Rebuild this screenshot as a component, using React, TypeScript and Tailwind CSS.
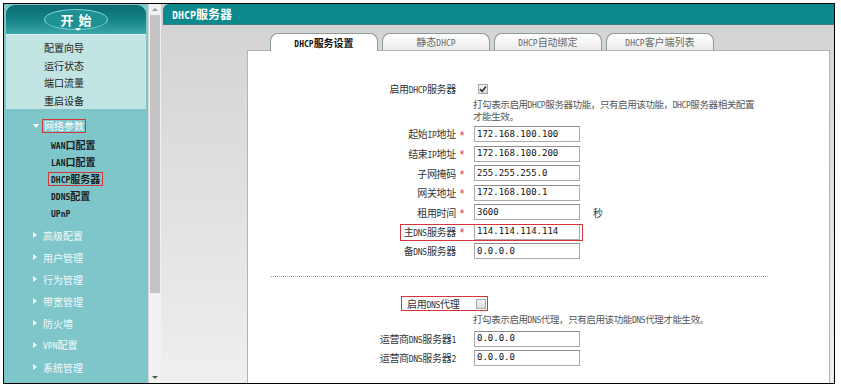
import type { ReactNode } from 'react'

const CJK = "font-['Noto_Sans_CJK_SC','Liberation_Sans',sans-serif]"
const MONO = "font-['DejaVu_Sans_Mono',monospace]"

// splits latin runs out so they render narrow like the old bitmap font
function Mix({ t, small = 'text-[8px]' }: { t: string; small?: string }) {
  const parts = t.split(/([A-Za-z0-9]+)/)
  return (
    <span>
      {parts.map((p, i) =>
        /^[A-Za-z0-9]+$/.test(p) ? (
          <span key={i} className={`${MONO} ${small}`}>{p}</span>
        ) : p ? (
          <span key={i}>{p}</span>
        ) : null
      )}
    </span>
  )
}

function Tri({ down = false }: { down?: boolean }) {
  return (
    <svg width="6" height="6" viewBox="0 0 6 6" className="shrink-0">
      {down ? <path d="M0 1 L6 1 L3 5 Z" fill="#fff" /> : <path d="M1 0 L5 3 L1 6 Z" fill="#f2fafa" />}
    </svg>
  )
}

function Check({ on }: { on: boolean }) {
  return (
    <div className="w-[10px] h-[10px] border border-[#a8a8a8] bg-gradient-to-b from-[#f4f4f4] to-[#dedede] flex items-center justify-center">
      {on && (
        <svg width="8" height="8" viewBox="0 0 8 8">
          <path d="M1 4.2 L3.2 6.3 L7 1.5" stroke="#333" strokeWidth="1.6" fill="none" />
        </svg>
      )}
    </div>
  )
}

function Input({ v }: { v: string }) {
  return (
    <div className={`w-[106px] h-[16px] border border-[#aaaaaa] border-t-[#8e8e8e] bg-white pl-[2px] flex items-center text-[9px] text-[#111] ${MONO}`}>
      {v}
    </div>
  )
}

function Row({ label, star, value, extra, boxed, h = 'h-[19.5px]' }: { label: string; star?: boolean; value: string; extra?: ReactNode; boxed?: boolean; h?: string }) {
  return (
    <div className={`relative flex items-center ${h}`}>
      <div className="w-[208px] text-right whitespace-nowrap tracking-[-0.3px]"><Mix t={label} /></div>
      <div className="w-[12px] text-center text-[#e2383c] text-[12px] leading-none font-['Liberation_Sans',sans-serif] pt-[3px]">{star ? '*' : ''}</div>
      <div className="ml-[6px]"><Input v={value} /></div>
      {extra}
      {boxed && <span className="absolute left-[152px] top-[2px] w-[183px] h-[17px] border border-[#d2363a]" />}
    </div>
  )
}

const subItems = ['WAN口配置', 'LAN口配置', 'DHCP服务器', 'DDNS配置', 'UPnP']
const menus = ['高级配置', '用户管理', '行为管理', '带宽管理', '防火墙', 'VPN配置', '系统管理']
const tabs = ['DHCP服务设置', '静态DHCP', 'DHCP自动绑定', 'DHCP客户端列表']

export default function App() {
  return (
    <div className={`w-[841px] h-[388px] bg-white pt-[3px] pl-[3px] ${CJK}`}>
      <div className="w-[832px] h-[381px] border border-black flex overflow-hidden">
        {/* left menu */}
        <aside className="w-[144px] h-full bg-[#7fc6cb] flex flex-col text-[10px]">
          <div className="mx-[2px] mt-[1px] h-[29px] rounded-t-[9px] bg-gradient-to-b from-[#0a6c71] via-[#138388] to-[#3aa8a9] flex items-center justify-center relative">
            <div className="w-[64px] h-[21px] rounded-[50%] border border-[#7fd0d0] bg-[#1d9094] flex items-center justify-center text-white font-bold text-[13px] tracking-[5px] pl-[5px]">
              开始
            </div>
            <div className="absolute left-[69px] bottom-[3px] w-0 h-0 border-l-[3px] border-r-[3px] border-t-[3px] border-l-transparent border-r-transparent border-t-white" />
          </div>
          <div className="mx-[2px] h-[75px] bg-[#c2e5e4] border-t border-[#e6f5f4] pt-[4px] pl-[38px] text-[#1e1e1e]">
            {['配置向导', '运行状态', '端口流量', '重启设备'].map(s => (
              <div key={s} className="h-[17.5px] flex items-center">{s}</div>
            ))}
          </div>
          <div className="pt-[9px] pl-[29px] h-[24px] flex items-center gap-[3px] text-white">
            <Tri down />
            <span className="border border-[#d0363c] px-[1px] h-[14px] flex items-center">网络参数</span>
          </div>
          <div className="mt-[3px] pl-[44px] font-bold text-[#1a1a1a]">
            {subItems.map(s => (
              <div key={s} className="h-[17px] flex items-center">
                <span className={s === 'DHCP服务器' ? 'border border-[#d0363c] px-[2px] h-[14px] flex items-center' : 'pl-[3px]'}>
                  <Mix t={s} />
                </span>
              </div>
            ))}
          </div>
          <div className="mt-[3px] pl-[28px] text-[#f2fafa]">
            {menus.map(s => (
              <div key={s} className="h-[22px] flex items-center gap-[5px]">
                <Tri />
                <Mix t={s} />
              </div>
            ))}
          </div>
        </aside>

        {/* scrollbar */}
        <div className="w-[13px] h-full bg-[#f1f1f1] border-l border-[#d6d6d6] flex flex-col items-center">
          <div className="h-[11px] flex items-center justify-center">
            <div className="w-0 h-0 border-l-[3px] border-r-[3px] border-b-[3px] border-l-transparent border-r-transparent border-b-[#9a9a9a]" />
          </div>
          <div className="w-[10px] h-[278px] bg-[#c4c4c4]" />
          <div className="flex-1" />
          <div className="h-[12px] flex items-center justify-center">
            <div className="w-0 h-0 border-l-[3px] border-r-[3px] border-t-[3px] border-l-transparent border-r-transparent border-t-[#555]" />
          </div>
        </div>

        {/* main */}
        <main className="flex-1 h-full flex flex-col bg-gradient-to-b from-[#d2d2d2] to-[#efefef]">
          <div className="ml-[2px] h-[21px] rounded-tl-[6px] bg-[#0b898d] border-b border-[#3d7e81] pl-[9px] flex items-center text-white font-bold text-[12px]">
            <Mix t="DHCP服务器" small="text-[10px]" />
          </div>
          <div className="flex-1 pl-[86px] pr-[4px] pt-[8px] flex flex-col">
            <div className="pl-[23px] h-[17px] flex items-end gap-[4px]">
              {tabs.map((t, i) =>
                i === 0 ? (
                  <div key={t} className="relative z-10 -mb-px w-[108px] h-[18px] rounded-t-[8px] border border-b-0 border-[#8e9b9b] bg-white flex items-center justify-center font-bold text-[10px] text-[#111]">
                    <Mix t={t} />
                  </div>
                ) : (
                  <div key={t} className="w-[108px] h-[17px] rounded-t-[8px] border border-b-0 border-[#8e9b9b] bg-gradient-to-b from-white to-[#ebebeb] flex items-center justify-center text-[10px] text-[#666]">
                    <Mix t={t} />
                  </div>
                )
              )}
            </div>
            <div className="flex-1 bg-white border-l border-t border-r border-[#b3b3b3] text-[10px] text-[#333] pt-[30px]">
              <div className="flex items-center h-[16px]">
                <div className="w-[208px] text-right tracking-[-0.3px]"><Mix t="启用DHCP服务器" /></div>
                <div className="ml-[22px]"><Check on /></div>
              </div>
              <div className="mt-[1.5px] pl-[225px] text-[9.5px] leading-[11px] tracking-[-0.4px] text-[#555] whitespace-nowrap">
                <div><Mix t="打勾表示启用DHCP服务器功能，只有启用该功能，DHCP服务器相关配置" /></div>
                <div>才能生效。</div>
              </div>
              <div className="mt-[3px]">
                <Row label="起始IP地址" star value="172.168.100.100" />
                <Row label="结束IP地址" star value="172.168.100.200" />
                <Row label="子网掩码" star value="255.255.255.0" />
                <Row label="网关地址" star value="172.168.100.1" />
                <Row label="租用时间" star value="3600" extra={<span className="ml-[13px]">秒</span>} />
                <Row label="主DNS服务器" star value="114.114.114.114" boxed />
                <Row label="备DNS服务器" value="0.0.0.0" />
              </div>
              <div className="mt-[15px] ml-[23px] w-[497px] border-t border-dotted border-[#9a9a9a]" />
              <div className="mt-[19px] ml-[153px] w-[87px] h-[15px] border border-[#d2363a] pl-[5px] pr-[1px] flex items-center justify-between tracking-[-0.3px]">
                <Mix t="启用DNS代理" />
                <Check on={false} />
              </div>
              <div className="mt-[2.5px] pl-[225px] text-[9.5px] leading-[11px] tracking-[-0.4px] text-[#555] whitespace-nowrap">
                <Mix t="打勾表示启用DNS代理，只有启用该功能DNS代理才能生效。" />
              </div>
              <div className="mt-[4px]">
                <Row label="运营商DNS服务器1" value="0.0.0.0" h="h-[19px]" />
                <Row label="运营商DNS服务器2" value="0.0.0.0" h="h-[19px]" />
              </div>
            </div>
          </div>
        </main>
      </div>
    </div>
  )
}
